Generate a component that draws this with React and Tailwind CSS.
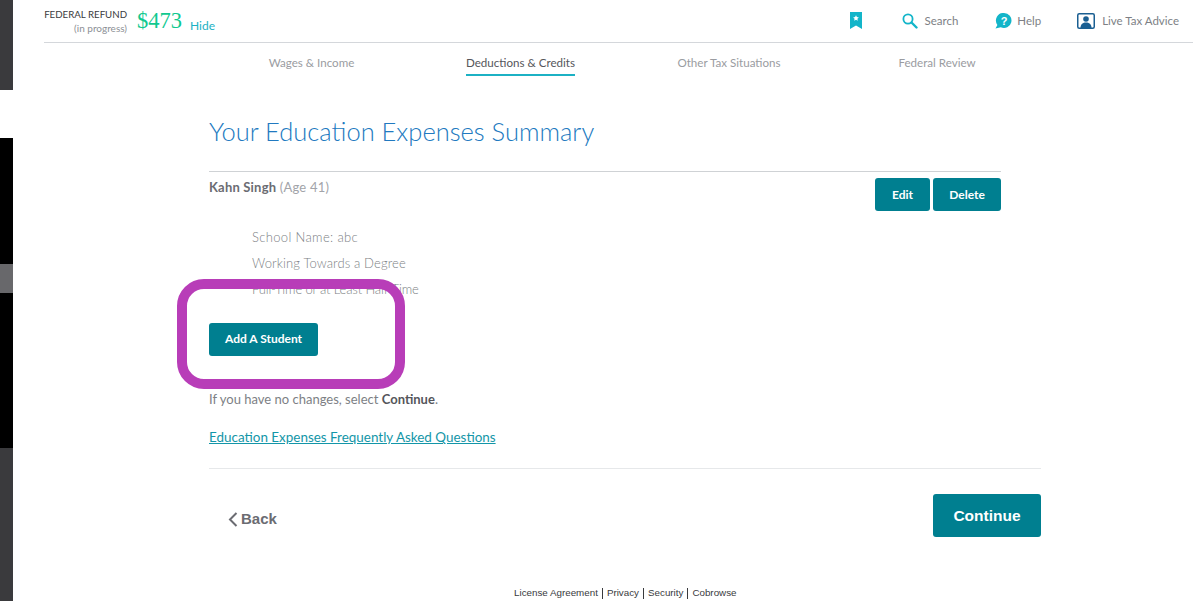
const font = "font-['Lato','Open_Sans',sans-serif]";

const BookmarkIcon = () => (
  <svg width="12" height="17" viewBox="0 0 12 17">
    <path d="M0 0h12v17l-6-3.500L0 17z" fill="#13b5c9" />
    <path d="M6 3.200l.9 1.900 2 .3-1.500 1.400.4 2L6 7.800l-1.800 1 .4-2L3.100 5.400l2-.3z" fill="#fff" />
  </svg>
);

const SearchIcon = () => (
  <svg width="16" height="16" viewBox="0 0 16 16" fill="none" stroke="#13b5c9">
    <circle cx="6" cy="6" r="4.600" strokeWidth="1.800" />
    <path d="M9.500 9.500l5 5" strokeWidth="2.400" strokeLinecap="round" />
  </svg>
);

const HelpIcon = () => (
  <svg width="17" height="16" viewBox="0 0 17 16">
    <path d="M9 0a7.500 7.500 0 1 1-3.200 14.300L0.500 15.500l1.900-3.600A7.500 7.500 0 0 1 9 0z" fill="#13b5c9" />
    <text x="9" y="12" textAnchor="middle" fontSize="11" fontWeight="700" fill="#fff" fontFamily="Liberation Sans">?</text>
  </svg>
);

const AdvisorIcon = () => (
  <svg width="18" height="16" viewBox="0 0 18 16">
    <rect x="0.750" y="0.750" width="16.500" height="14.500" rx="1.500" fill="#fff" stroke="#1a5f92" strokeWidth="1.500" />
    <circle cx="9" cy="6" r="2.800" fill="#1a5f92" />
    <path d="M3.500 15c0-4 2.500-5.500 5.500-5.500s5.500 1.500 5.500 5.500z" fill="#1a5f92" />
  </svg>
);

const BackChevron = () => (
  <svg width="10" height="15" viewBox="0 0 10 15" fill="none" stroke="#6b6c72" strokeWidth="2">
    <path d="M8.500 1L2 7.500 8.500 14" />
  </svg>
);

const TealButton = ({ children, className }) => (
  <button className={`bg-[#007f90] text-white rounded-[3px] text-[12px] font-bold ${className}`}>
    {children}
  </button>
);

const navItems = [
  { label: "Wages & Income", w: "w-[209px]" },
  { label: "Deductions & Credits", w: "w-[209px]", active: true },
  { label: "Other Tax Situations", w: "w-[208px]" },
  { label: "Federal Review", w: "w-[208px]" },
];

export default function App() {
  return (
    <div className={`relative flex h-[601px] w-[1193px] overflow-hidden bg-white text-[#6b6c72] ${font}`}>
      {/* barra lateral */}
      <div className="flex w-[13px] shrink-0 flex-col">
        <div className="h-[90px] bg-[#3a3a3d]" />
        <div className="h-[48px] bg-white" />
        <div className="h-[126px] bg-black" />
        <div className="h-[29px] bg-[#68686b]" />
        <div className="h-[155px] bg-black" />
        <div className="flex-1 bg-[#3a3a3d]" />
      </div>

      <div className="flex min-w-0 flex-1 flex-col">
        <header className="ml-[31px] flex h-[43px] shrink-0 items-start border-b border-[#d4d7db]">
          <div className="mt-[8px] w-[83px] whitespace-nowrap text-right leading-none">
            <div className="text-[9.700px] leading-[13px] text-[#393a3d]">FEDERAL REFUND</div>
            <div className="text-[10px] leading-[14px] text-[#8d9096]">(in progress)</div>
          </div>
          <div className="ml-[10px] mt-[7px] font-['Liberation_Serif',serif] text-[22.500px] leading-[27px] text-[#10c98f]">$473</div>
          <div className="ml-[8px] mt-[19px] text-[12px] leading-[14px] text-[#1cb1c4]">Hide</div>
          <div className="ml-auto mt-[12px] flex items-center pr-[14px] text-[11.500px] leading-[16px] text-[#7d7f85]">
            <BookmarkIcon />
            <div className="ml-[40px] flex items-center gap-[6px]"><SearchIcon />Search</div>
            <div className="ml-[37px] flex items-center gap-[5px]"><HelpIcon />Help</div>
            <div className="ml-[36px] flex items-center gap-[7px]"><AdvisorIcon />Live Tax Advice</div>
          </div>
        </header>

        <nav className="ml-[194px] flex h-[33px] shrink-0">
          {navItems.map((item) => (
            <div key={item.label} className={`${item.w} flex justify-center`}>
              <span className={`h-[33px] pt-[13px] text-[11.600px] leading-[14px] ${item.active ? "border-b-2 border-[#1cb1c4] text-[#55565b]" : "text-[#9a9ca1]"}`}>
                {item.label}
              </span>
            </div>
          ))}
        </nav>

        <main className="ml-[196px] w-[832px] flex-1">
          <h1 className="mt-[40px] text-[25.500px] font-light leading-[30px] text-[#2179c0]">Your Education Expenses Summary</h1>

          <div className="mt-[25px] w-[792px] border-t border-[#cfd2d5]">
            <div className="flex justify-between">
              <div className="mt-[7px] text-[13px] leading-[16px] tracking-[0.2px]">
                <span className="font-bold">Kahn Singh</span> <span className="text-[#a2a4a9]">(Age 41)</span>
              </div>
              <div className="mt-[6px] flex gap-[3px]">
                <TealButton className="h-[33px] w-[55px]">Edit</TealButton>
                <TealButton className="h-[33px] w-[68px]">Delete</TealButton>
              </div>
            </div>
          </div>

          <div className="ml-[43px] mt-[18px] flex flex-col gap-[10px] text-[13px] font-light leading-[16px] text-[#7d7f85]">
            <div className="tracking-[0.35px]">School Name: abc</div>
            <div className="tracking-[0.12px]">Working Towards a Degree</div>
            <div className="tracking-[-0.15px]">Full-Time or at Least Half-Time</div>
          </div>

          <TealButton className="mt-[26px] block h-[33px] w-[109px] pb-px">Add A Student</TealButton>

          <p className="mt-[35px] text-[13px] leading-[16px] text-[#7d7f85]">
            If you have no changes, select <span className="font-bold text-[#55565b]">Continue</span>.
          </p>
          <a className="mt-[22px] block text-[13.450px] leading-[16px] text-[#1396a8] underline">
            Education Expenses Frequently Asked Questions
          </a>

          <div className="mt-[23px] flex items-start justify-between border-t border-[#e6e8ea] pt-[25px]">
            <div className="ml-[19px] mt-[14px] flex items-center gap-[3px] font-['Liberation_Sans',sans-serif] text-[15px] font-bold leading-[22px] text-[#6b6c72]">
              <BackChevron />
              Back
            </div>
            <button className="h-[43px] w-[108px] rounded-[3px] bg-[#007f90] font-['Liberation_Sans',sans-serif] text-[15.500px] font-bold text-white">
              Continue
            </button>
          </div>
        </main>

        <footer className="mb-[2px] ml-[501px] flex items-center font-['Liberation_Sans',sans-serif] text-[9.800px] leading-[12px] text-[#393a3d]">
          <span>License Agreement</span>
          <span className="mx-[4px] h-[11px] w-px bg-[#393a3d]" />
          <span>Privacy</span>
          <span className="mx-[4px] h-[11px] w-px bg-[#393a3d]" />
          <span>Security</span>
          <span className="mx-[4px] h-[11px] w-px bg-[#393a3d]" />
          <span>Cobrowse</span>
        </footer>
      </div>

      {/* marco de resaltado */}
      <div className="absolute left-[177px] top-[279px] h-[110px] w-[228px] rounded-[27px] border-[10px] border-[#b83db8]" />
    </div>
  );
}
